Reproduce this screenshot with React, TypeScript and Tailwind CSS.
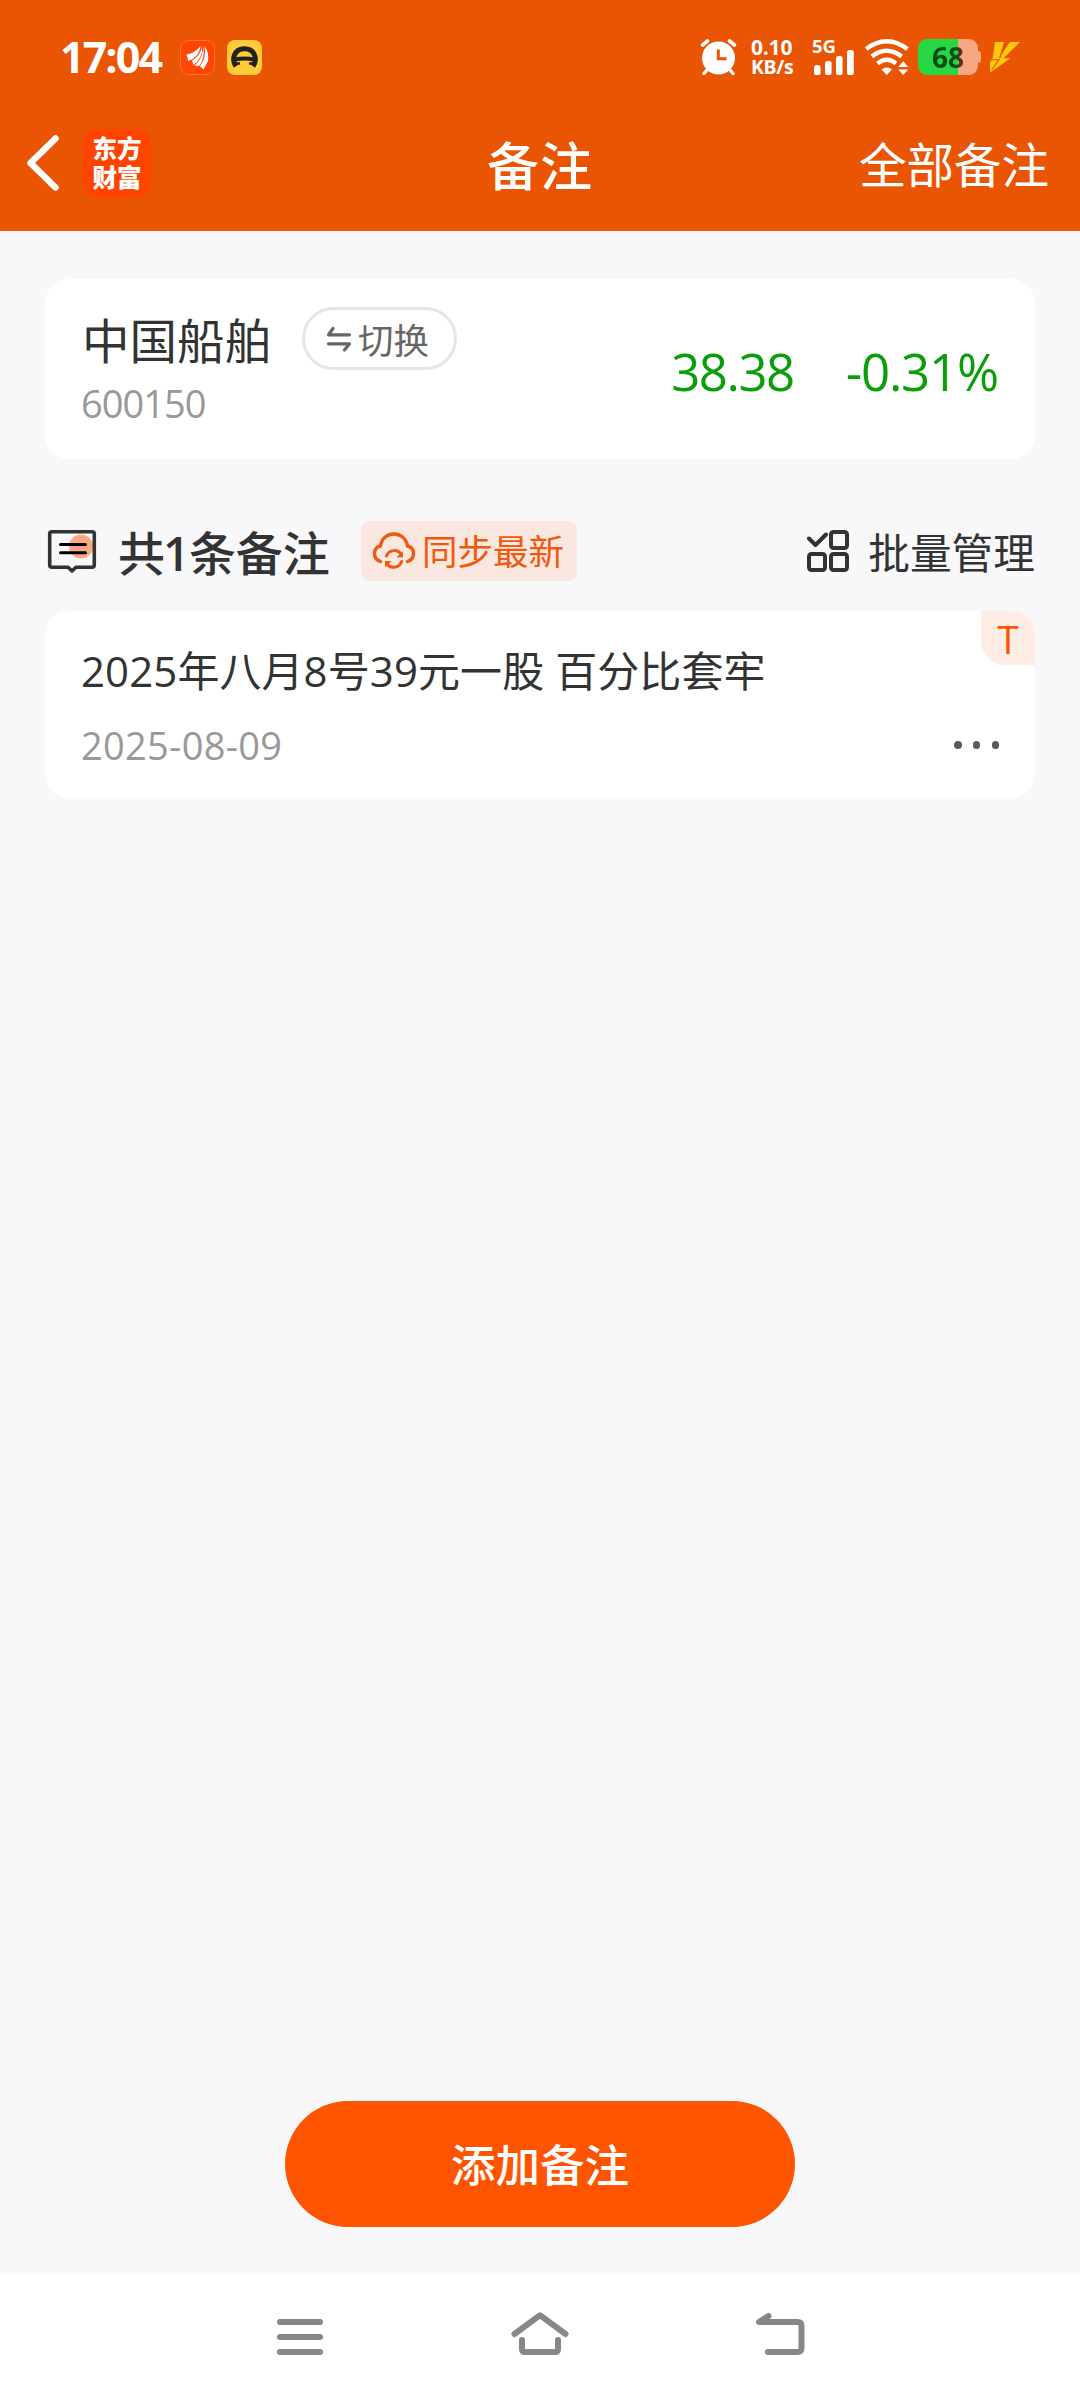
import React from "react";

function AlarmIcon() {
  return (
    <svg width="37" height="37" viewBox="0 0 37 37" fill="none" stroke="#fff" strokeLinecap="round">
      <circle cx="18.5" cy="19" r="16.5" fill="#fff" stroke="none" />
      <path d="M2.5 6 L7.5 2" strokeWidth="3.6" />
      <path d="M34.5 6 L29.5 2" strokeWidth="3.6" />
      <path d="M7 31 L4 34.5" strokeWidth="3.4" />
      <path d="M30 31 L33 34.5" strokeWidth="3.4" />
      <path d="M18.3 10.5 V19.8 H26.5" stroke="#ea5504" strokeWidth="3" strokeLinecap="butt" />
    </svg>
  );
}

function SignalIcon() {
  return (
    <svg width="40" height="25" viewBox="0 0 40 25" fill="#fff">
      <rect x="0" y="15" width="6.6" height="10" rx="2.6" />
      <rect x="11" y="11" width="6.6" height="14" rx="2.6" />
      <rect x="22" y="6" width="6.6" height="19" rx="2.6" />
      <rect x="33" y="0" width="6.8" height="25" rx="2.6" />
    </svg>
  );
}

function WifiIcon() {
  return (
    <svg width="44" height="36" viewBox="0 0 44 36" fill="none" stroke="#fff" strokeWidth="4.4">
      <path d="M1.2 10 Q21.7 -5.500 42.4 10" />
      <path d="M6.8 17.5 Q21.7 6 36.8 17.5" />
      <path d="M12.5 24.500 Q21.7 17 31 24.500" />
      <path d="M16.500 30.500 Q21.7 26.4 27 30.500 L21.7 36 Z" fill="#fff" stroke="none" />
      <path d="M33.2 28 H43.2 L38.2 22.3 Z" fill="#fff" stroke="none" />
      <path d="M33.2 30.4 H43.2 L38.2 36 Z" fill="#fff" stroke="none" />
    </svg>
  );
}

function Battery() {
  return (
    <div className="flex items-center">
      <div className="flex h-9 w-[60px] items-center justify-center rounded-[9px] bg-[linear-gradient(90deg,#27d845_0,#27d845_40px,#f6a681_40px)]">
        <span className="bg-[linear-gradient(90deg,#0d4d18_0,#0d4d18_27px,#54301f_27px)] bg-clip-text text-[28px] leading-9 font-bold text-transparent">
          68
        </span>
      </div>
      <div className="h-3 w-[3px] rounded-r-[3px] bg-[#f6a681]" />
    </div>
  );
}

function BoltIcon() {
  return (
    <svg width="30" height="31" viewBox="0 0 30 31" fill="#ffc80a">
      <path d="M5 0 H14.5 L9.5 16.5 L2.5 17.5 Z" />
      <path d="M20 0 H30 L13.5 16.3 H20.5 L0 30.5 V20.5 L1.5 17.6 L9 16.5 L17.5 3.5 Z" />
      <path d="M1 18 L9 17.5 L2 27.5 M14.5 0 L9.8 16" fill="none" stroke="#ea5504" strokeWidth="1.1" />
    </svg>
  );
}

function StatusBar() {
  return (
    <div className="flex h-[114px] items-center pr-[60px] pl-[60px] text-white">
      <span className="w-[120px] text-[43px] leading-[48px] font-bold tracking-[-1.900px] whitespace-nowrap">17:04</span>
      <svg width="35" height="35" viewBox="0 0 35 35" fill="none">
        <rect x="0.5" y="0.5" width="34" height="34" rx="8" fill="#ff4602" stroke="#ff7042" />
        <path d="M6.5 14.500 Q15 13 20.500 6 Q19.500 17 8.300 21 Z" fill="#fff" />
        <path d="M22 6.500 Q23.500 17 13.500 25 L12 20.500 Q20.500 15.500 22 6.500 Z" fill="#fff" />
        <path d="M24.500 6 Q29.500 13 28 21 L23.500 29.500 L20 26 Q27 17 24.500 6 Z" fill="#fff" />
        <path d="M23.300 7 Q25.500 18 19 26 L14.500 25.500 Q23 18 23.300 7 Z" fill="#fff" />
      </svg>
      <svg className="ml-3" width="35" height="35" viewBox="0 0 35 35" fill="none" stroke="#222">
        <rect width="35" height="35" rx="8" fill="#ffcb37" stroke="none" />
        <path d="M9 26.300 C4.500 20 6.500 8.800 17.500 8.800 C28.500 8.800 30.500 20 26 26.300" strokeWidth="5" />
        <path d="M8 19.500 Q17.500 17.500 27 19.500" strokeWidth="4.200" />
        <path d="M9.500 23.500 H13 M22 23.500 H25.500" strokeWidth="2.500" />
      </svg>
      <div className="ml-auto flex items-center">
        <AlarmIcon />
        <div className="ml-[14px] flex w-[46px] flex-col text-[21px] leading-[20px] font-bold whitespace-nowrap">
          <span className="tracking-[-0.2px]">0.10</span>
          <span className="text-[19.500px] tracking-[-0.4px]">KB/s</span>
        </div>
        <div className="relative ml-[17px] flex h-9 w-[40px] items-end">
          <span className="absolute -top-0.5 -left-0.5 text-[18.500px] leading-[18px] font-bold">5G</span>
          <SignalIcon />
        </div>
        <div className="ml-[11px]">
          <WifiIcon />
        </div>
        <div className="ml-[9px]">
          <Battery />
        </div>
        <div className="ml-[9px]">
          <BoltIcon />
        </div>
      </div>
    </div>
  );
}

function Header() {
  return (
    <header className="h-[231px] shrink-0 bg-[#ea5504] text-white">
      <StatusBar />
      <div className="grid h-[102px] grid-cols-[1fr_auto_1fr] items-center pr-[31px] pl-[26px]">
        <div className="flex items-center pb-1">
          <svg width="34" height="56" viewBox="0 0 34 56" fill="none" stroke="#fff" strokeWidth="6.500" strokeLinecap="round" strokeLinejoin="round">
            <path d="M29.500 3.500 L4.500 28 L29.500 52.500" />
          </svg>
          <div className="ml-[23px] flex size-[68px] flex-col items-center justify-center rounded-[14px] bg-[#ff4400] pt-px font-['Liberation_Sans','Noto_Sans_CJK_SC',sans-serif] text-[24.500px] leading-[29px] font-black">
            <span>东方</span>
            <span>财富</span>
          </div>
        </div>
        <h1 className="pt-px pl-[5px] text-[52px] leading-[60px] font-medium tracking-[1px]">备注</h1>
        <span className="text-right text-[47.500px] leading-[60px]">全部备注</span>
      </div>
    </header>
  );
}

function StockCard() {
  return (
    <section className="flex h-[180px] shrink-0 items-start justify-between rounded-3xl bg-white pt-[28px] pr-[37px] pl-[37px]">
      <div className="flex flex-col">
        <div className="flex h-[63px] items-center">
          <span className="pt-1 text-[47.500px] leading-[60px] text-[#333]">中国船舶</span>
          <button className="ml-[30px] flex h-[63px] w-[155px] items-center rounded-full border-[3px] border-[#e5e5e5] pl-[21px] text-[35.500px] leading-[48px] text-[#666]">
            <svg className="mr-[6px]" width="26" height="26" viewBox="0 0 26 26" fill="none" stroke="#666" strokeWidth="3.200" strokeLinecap="round" strokeLinejoin="round">
              <path d="M7 2.500 L2.500 8.800 H23.500" />
              <path d="M2.500 17.800 H23.500 L18.500 24" />
            </svg>
            <span className="pt-0.5">切换</span>
          </button>
        </div>
        <span className="mt-[10px] -ml-px h-[46px] text-[38px] leading-[46px] tracking-[-1px] text-[#999]">600150</span>
      </div>
      <div className="flex pt-[34px] text-[51px] leading-[60px] text-[#0a9f0a]">
        <span className="mr-[52px] tracking-[-1.500px]">38.38</span>
        <span className="tracking-[-1.200px]">-0.31%</span>
      </div>
    </section>
  );
}

function NotesHeading() {
  return (
    <div className="mt-[62px] flex h-[60px] items-center">
      <svg className="ml-[2px]" width="50" height="46" viewBox="0 0 50 46" fill="none">
        <circle cx="34" cy="18.500" r="12" fill="#fda882" />
        <path d="M5 3.800 H45 Q47.300 3.800 47.300 6 V37 Q47.300 39.200 45 39.200 H29 L25 43 L21 39.200 H5 Q2.700 39.200 2.700 37 V6 Q2.700 3.800 5 3.800 Z" stroke="#333" strokeWidth="3.600" strokeLinejoin="round" />
        <path d="M13.500 16.500 H38.500 M13.500 24.700 H38.500" stroke="#000" strokeWidth="3" strokeLinecap="round" />
      </svg>
      <h2 className="ml-[21px] w-[213px] pt-1 text-[47px] leading-[60px] font-medium whitespace-nowrap text-[#333]">
        共<span className="-mr-[1px] -ml-[2px] font-semibold">1</span>条备注
      </h2>
      <button className="ml-[30px] flex h-[60px] w-[216px] items-center rounded-[9px] bg-[#f9e7e0] pl-[11px] text-[35.500px] leading-[58px] text-[#f05a0e]">
        <svg className="mr-[6px]" width="44" height="42" viewBox="0 0 44 42" fill="none" stroke="#f05a0e" strokeWidth="3.400" strokeLinecap="round" strokeLinejoin="round">
          <path d="M8.500 31.500 C0.500 29 0.500 18 8.500 16 C10.500 0 33 0 35.500 16 C43.500 18 43.500 29 35.500 31.500" />
          <path d="M14.500 26 C17 19.500 26 18.500 29.300 25 M29.600 31.500 C27 38.500 18 39.500 14.700 33" strokeWidth="3" />
          <path d="M30.500 22 V27 H25.500 Z M13.500 36.500 V31.500 H18.500 Z" fill="#f05a0e" strokeWidth="0.800" />
        </svg>
        <span className="pb-px">同步最新</span>
      </button>
      <div className="ml-auto flex items-center text-[#333]">
        <svg width="42" height="42" viewBox="0 0 42 42" fill="none" stroke="#333" strokeWidth="4" strokeLinecap="round" strokeLinejoin="round">
          <path d="M2 8.500 L8.500 15 L19 4.500" />
          <rect x="24" y="2" width="16" height="16" rx="2.500" />
          <rect x="2" y="24" width="16" height="16" rx="2.500" />
          <rect x="24" y="24" width="16" height="16" rx="2.500" />
        </svg>
        <span className="ml-[19px] pt-1 text-[41.700px] leading-[56px]">批量管理</span>
      </div>
    </div>
  );
}

function NoteCard() {
  return (
    <article className="relative mt-[30px] h-[187px] shrink-0 rounded-3xl bg-white pt-[30px] pr-[36px] pl-[36px]">
      <div className="absolute top-0 right-0 flex size-[54px] items-center justify-center rounded-tr-3xl rounded-bl-3xl bg-[#ffede5] pt-0.5 text-[39px] leading-[52px] font-medium text-[#ff5500]">
        T
      </div>
      <p className="text-[42px] leading-[60px] tracking-[0.08px] whitespace-pre text-[#333]">2025年八月8号39元一股 百分比套牢</p>
      <div className="mt-[20px] flex h-[48px] items-center justify-between">
        <time className="text-[38px] leading-[48px] tracking-[0.3px] text-[#999]">2025-08-09</time>
        <div className="flex gap-[11.200px]">
          <i className="size-[7.500px] rounded-full bg-[#5a5a5a]" />
          <i className="size-[7.500px] rounded-full bg-[#5a5a5a]" />
          <i className="size-[7.500px] rounded-full bg-[#5a5a5a]" />
        </div>
      </div>
    </article>
  );
}

function SystemNav() {
  return (
    <nav className="flex h-[126px] shrink-0 items-start justify-center gap-[182px] bg-white pt-[37px]">
      <svg width="58" height="46" viewBox="0 0 58 46" fill="none" stroke="#888" strokeWidth="6" strokeLinecap="round">
        <path d="M9 11 H49 M9 26 H49 M9 41 H49" />
      </svg>
      <svg width="58" height="46" viewBox="0 0 58 46" fill="none" stroke="#888" strokeWidth="6" strokeLinecap="round" strokeLinejoin="round">
        <path d="M3.500 23 L29 4.200 L54.500 23" />
        <path d="M11 29 V38 Q11 41 14 41 H44 Q47 41 47 38 V29" />
      </svg>
      <svg width="58" height="46" viewBox="0 0 58 46" fill="none" stroke="#888" strokeWidth="6" strokeLinecap="round" strokeLinejoin="round">
        <path d="M17.500 5 L8 11 H46.500 Q50.500 11 50.500 15 V37 Q50.500 41 46.500 41 H17" />
      </svg>
    </nav>
  );
}

export default function App() {
  return (
    <div className="flex h-[2400px] w-[1080px] flex-col bg-[#f8f8fa] font-['Open_Sans','Noto_Sans_CJK_SC',sans-serif]">
      <Header />
      <main className="flex flex-1 flex-col px-[45px] pt-[48px] pb-[47px]">
        <StockCard />
        <NotesHeading />
        <NoteCard />
        <button className="mx-auto mt-auto h-[126px] w-[510px] rounded-full bg-[#ff5500] pt-[2px] text-[44.500px] leading-[124px] font-medium text-white">
          添加备注
        </button>
      </main>
      <SystemNav />
    </div>
  );
}
